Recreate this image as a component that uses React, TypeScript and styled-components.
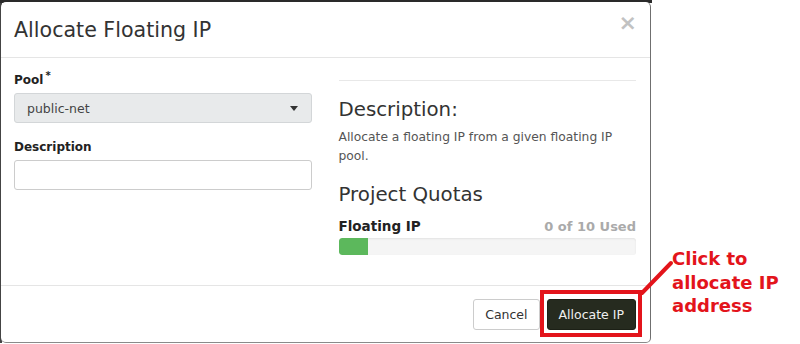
import React from 'react';
import styled, { createGlobalStyle } from 'styled-components';

const GlobalStyle = createGlobalStyle`
  html, body {
    margin: 0;
    padding: 0;
    background: #ffffff;
    font-family: "DejaVu Sans", "Open Sans", sans-serif;
  }
  * { box-sizing: border-box; }
`;

const Stage = styled.div`
  position: relative;
  width: 800px;
  height: 344px;
  overflow: hidden;
`;

const Backdrop = styled.div`
  width: 652px;
  padding: 2px 0 0 1px;
  background: linear-gradient(#2a2a2a 0 3px, transparent 3px),
    linear-gradient(90deg, #444 0 2px, transparent 2px);
`;

const Modal = styled.div`
  width: 650px;
  background: #fff;
  border-radius: 5px;
  border-right: 1px solid #6f6f6f;
  border-bottom: 1px solid #8a8a8a;
`;

const Header = styled.div`
  display: flex;
  justify-content: space-between;
  align-items: flex-start;
  padding: 14px 13px 13px 13px;
  border-bottom: 1px solid #e5e5e5;
`;

const Title = styled.h4`
  margin: 0;
  font-size: 20.6px;
  line-height: 28px;
  font-weight: 400;
  color: #333;
`;

const Close = styled.span`
  font-size: 22px;
  line-height: 16px;
  font-weight: 700;
  color: #c2c2c2;
  margin-top: -1px;
`;

const Body = styled.div`
  display: grid;
  grid-template-columns: 1fr 1fr;
  gap: 27px;
  padding: 13px 14px 30px 13px;
  border-bottom: 1px solid #e5e5e5;
`;

const Column = styled.div`
  display: flex;
  flex-direction: column;
`;

const Label = styled.label<{ $gap?: number }>`
  font-size: 12px;
  line-height: 18px;
  font-weight: 700;
  color: #222;
  margin-top: ${p => p.$gap ?? 0}px;
  margin-bottom: 4px;

  sup {
    font-size: 10px;
    line-height: 0;
    margin-left: 2px;
  }
`;

const Select = styled.div`
  display: flex;
  align-items: center;
  justify-content: space-between;
  height: 30px;
  padding: 0 12px;
  background: #e8eaeb;
  border: 1px solid #d3d6d8;
  border-radius: 3px;
  font-size: 12.5px;
  color: #444;
`;

const Caret = styled.span`
  width: 0;
  height: 0;
  border-left: 4px solid transparent;
  border-right: 4px solid transparent;
  border-top: 5px solid #333;
  margin-right: 1px;
`;

const Input = styled.div`
  height: 30px;
  border: 1px solid #ccc;
  border-radius: 3px;
  background: #fff;
`;

const Rule = styled.hr`
  margin: 9px 0 0;
  border: 0;
  border-top: 1px solid #e8e8e8;
`;

const SideHeading = styled.h3<{ $gap: number }>`
  margin: ${p => p.$gap}px 0 0;
  font-size: 19.8px;
  line-height: 24px;
  font-weight: 400;
  color: #333;
`;

const Text = styled.p`
  margin: 6px 0 0;
  font-size: 12.3px;
  line-height: 19px;
  color: #555;
`;

const QuotaRow = styled.div`
  display: flex;
  justify-content: space-between;
  align-items: baseline;
  margin-top: 10px;
  font-size: 13.5px;
  line-height: 18px;
  font-weight: 700;
`;

const QuotaName = styled.span`
  color: #222;
`;

const QuotaUsed = styled.span`
  color: #aaa;
  font-size: 13px;
`;

const Track = styled.div`
  margin-top: 2px;
  height: 17px;
  background: #f5f5f5;
  border-radius: 3px;
  box-shadow: inset 0 1px 2px rgba(0, 0, 0, 0.08);
  overflow: hidden;
`;

const Fill = styled.div`
  height: 100%;
  background: #5cb85c;
  border-radius: 3px 0 0 3px;
`;

const Footer = styled.div`
  display: flex;
  justify-content: flex-end;
  gap: 7px;
  padding: 13px 14px 12px;
`;

const Button = styled.button<{ $primary?: boolean }>`
  height: 31px;
  padding: 0 11px;
  font-family: inherit;
  font-size: 12.5px;
  border-radius: 3px;
  border: 1px solid ${p => (p.$primary ? '#1c2016' : '#ccc')};
  background: ${p => (p.$primary ? '#262b1f' : '#fff')};
  color: ${p => (p.$primary ? '#f0f0f0' : '#333')};
`;

const Highlight = styled.div`
  position: absolute;
  left: 540px;
  top: 290px;
  width: 102px;
  height: 47px;
  border: 4px solid #e3141b;
`;

const Pointer = styled.svg`
  position: absolute;
  left: 636px;
  top: 258px;
`;

const Note = styled.div`
  position: absolute;
  left: 672px;
  top: 247px;
  font-size: 18px;
  line-height: 23.5px;
  font-weight: 700;
  color: #e3141b;
`;

export default function App() {
  const used = 0;
  const limit = 10;
  // the bar keeps a small visible stub even at zero usage
  const fillPct = Math.max((used / limit) * 100, 10);

  return (
    <Stage>
      <GlobalStyle />
      <Backdrop>
        <Modal>
          <Header>
            <Title>Allocate Floating IP</Title>
            <Close>×</Close>
          </Header>
          <Body>
            <Column>
              <Label>
                Pool<sup>*</sup>
              </Label>
              <Select>
                public-net
                <Caret />
              </Select>
              <Label $gap={15}>Description</Label>
              <Input />
            </Column>
            <Column>
              <Rule />
              <SideHeading $gap={17}>Description:</SideHeading>
              <Text>Allocate a floating IP from a given floating IP pool.</Text>
              <SideHeading $gap={17}>Project Quotas</SideHeading>
              <QuotaRow>
                <QuotaName>Floating IP</QuotaName>
                <QuotaUsed>
                  {used} of {limit} Used
                </QuotaUsed>
              </QuotaRow>
              <Track>
                <Fill style={{ width: `${fillPct}%` }} />
              </Track>
            </Column>
          </Body>
          <Footer>
            <Button>Cancel</Button>
            <Button $primary>Allocate IP</Button>
          </Footer>
        </Modal>
      </Backdrop>
      <Highlight />
      <Pointer width="40" height="40" viewBox="0 0 40 40">
        <line x1="6" y1="35" x2="35" y2="5" stroke="#e3141b" strokeWidth="4" strokeLinecap="round" />
      </Pointer>
      <Note>
        Click to
        <br />
        allocate IP
        <br />
        address
      </Note>
    </Stage>
  );
}
